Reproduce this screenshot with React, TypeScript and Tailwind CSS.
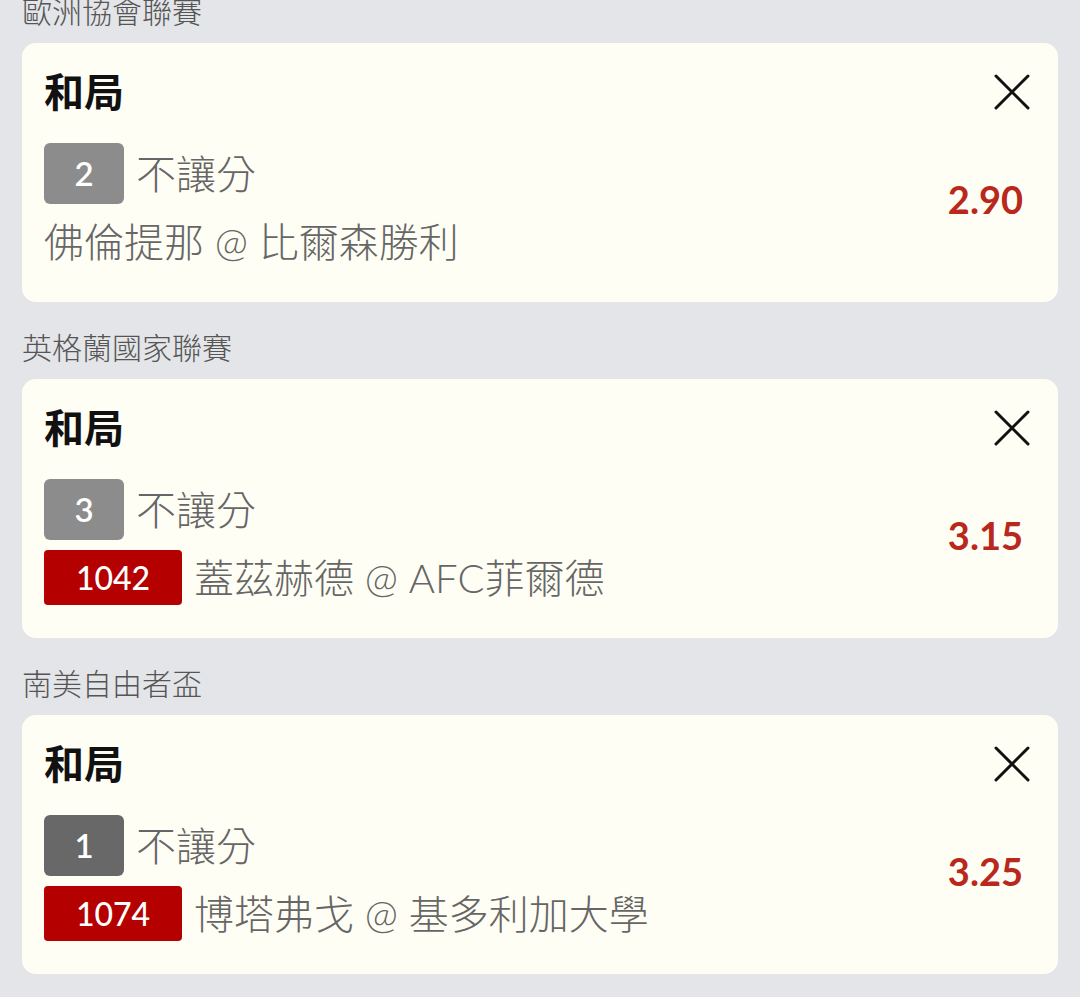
const bets = [
  {
    league: "歐洲協會聯賽",
    num: "2",
    numColor: "bg-[#8c8c8c]",
    code: "",
    match: "佛倫提那 @ 比爾森勝利",
    odds: "2.90",
  },
  {
    league: "英格蘭國家聯賽",
    num: "3",
    numColor: "bg-[#8c8c8c]",
    code: "1042",
    match: "蓋茲赫德 @ AFC菲爾德",
    odds: "3.15",
  },
  {
    league: "南美自由者盃",
    num: "1",
    numColor: "bg-[#686868]",
    code: "1074",
    match: "博塔弗戈 @ 基多利加大學",
    odds: "3.25",
  },
];

function CloseIcon() {
  return (
    <svg width="36" height="36" viewBox="0 0 36 36" fill="none">
      <path d="M2 2L34 34M34 2L2 34" stroke="#111" strokeWidth="3" strokeLinecap="round" />
    </svg>
  );
}

export default function App() {
  return (
    <div className="min-h-[997px] bg-[#e4e5e8] px-[22px] pb-[23px] font-['Lato','Noto_Sans_CJK_TC',sans-serif]">
      <div className="-mt-[7px]">
        {bets.map((b, i) => (
          <div key={i}>
            <p
              className={`${i === 0 ? "pt-0" : "pt-[27px]"} pb-[14px] text-[30px] font-light leading-[36px] text-[#555]`}
            >
              {b.league}
            </p>
            <div className="rounded-[14px] bg-[#fffef5] pl-[22px] pr-[28px] pt-[29px] pb-[33px]">
              <div className="flex h-[40px] items-center justify-between">
                <p className="text-[40px] font-bold leading-[40px] text-[#111]">和局</p>
                <CloseIcon />
              </div>
              <div className="flex items-center justify-between">
                <div className="mt-[31px] flex flex-col gap-[10px]">
                  <div className="flex items-center gap-[12px]">
                    <span
                      className={`flex h-[61px] w-[80px] items-center justify-center rounded-[6px] ${b.numColor} text-[33px] font-semibold text-white`}
                    >
                      {b.num}
                    </span>
                    <span className="text-[40px] font-light leading-[48px] text-[#666]">不讓分</span>
                  </div>
                  <div className="flex h-[55px] items-center gap-[12px]">
                    {b.code && (
                      <span className="flex h-[55px] w-[138px] items-center justify-center rounded-[4px] bg-[#b50000] text-[32px] font-medium text-white">
                        {b.code}
                      </span>
                    )}
                    <span className="text-[40px] font-light leading-[48px] text-[#666]">{b.match}</span>
                  </div>
                </div>
                <p className="mt-[17px] mr-[7px] text-[38px] font-bold leading-[44px] text-[#b8281c]">
                  {b.odds}
                </p>
              </div>
            </div>
          </div>
        ))}
      </div>
    </div>
  );
}
